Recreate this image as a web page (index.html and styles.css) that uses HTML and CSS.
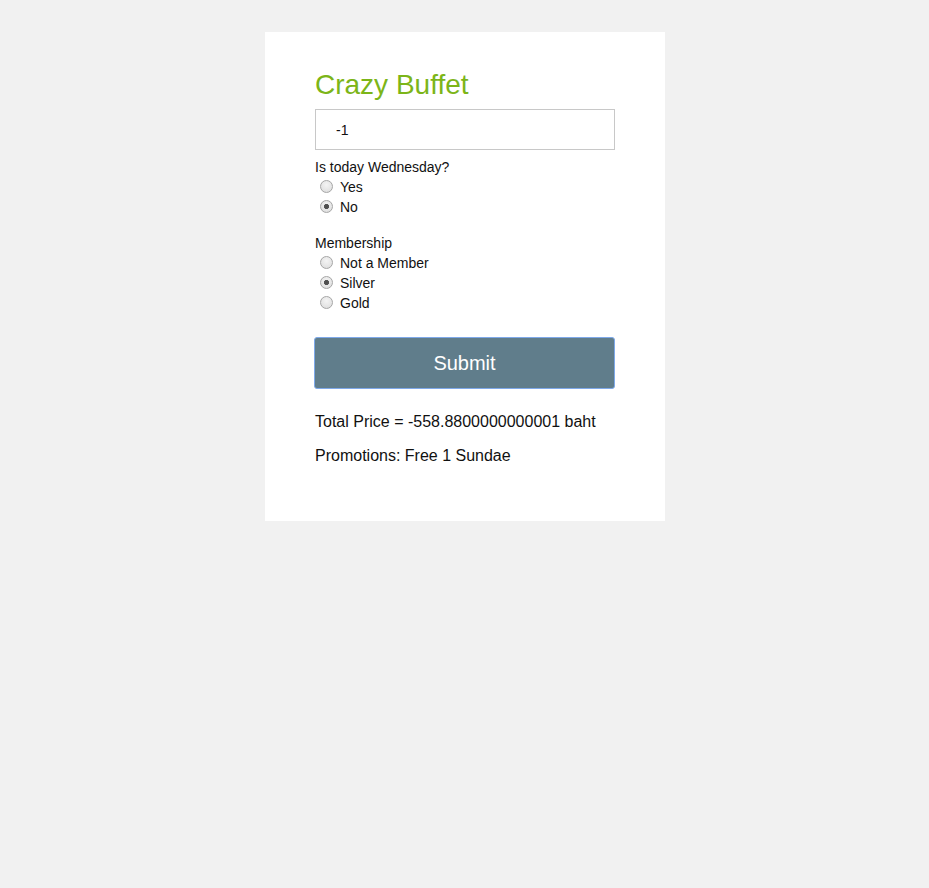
FILE: index.html
```html
<!DOCTYPE html>
<html>
<head>
<meta charset="utf-8">
<title>Crazy Buffet</title>
<link rel="stylesheet" href="styles.css">
</head>
<body>
<div class="card">
  <h1 class="title">Crazy Buffet</h1>
  <input class="amount" type="text" value="-1">
  <div class="group">
    <div class="group-label">Is today Wednesday?</div>
    <label class="option"><input class="radio" type="radio" name="wed"> Yes</label>
    <label class="option"><input class="radio" type="radio" name="wed" checked> No</label>
  </div>
  <div class="group group-member">
    <div class="group-label">Membership</div>
    <label class="option"><input class="radio" type="radio" name="mem"> Not a Member</label>
    <label class="option"><input class="radio" type="radio" name="mem" checked> Silver</label>
    <label class="option"><input class="radio" type="radio" name="mem"> Gold</label>
  </div>
  <button class="submit" type="button">Submit</button>
  <p class="result">Total Price = -558.8800000000001 baht</p>
  <p class="result promo">Promotions: Free 1 Sundae</p>
</div>
</body>
</html>
```
FILE: styles.css
```css
html, body {
  margin: 0;
  padding: 0;
}
body {
  background: #f1f1f1;
  font-family: "Liberation Sans", Arial, sans-serif;
  color: #111;
}
.card {
  width: 300px;
  margin: 32px 0 0 265px;
  background: #fff;
  padding: 37px 50px 56px;
}
.title {
  margin: 0;
  font-size: 28px;
  font-weight: normal;
  line-height: 32px;
  color: #7cb518;
}
.amount {
  display: block;
  box-sizing: border-box;
  width: 300px;
  height: 41px;
  margin: 8px 0 0;
  padding: 0 20px;
  border: 1px solid #c8c8c8;
  font-family: "Liberation Sans", Arial, sans-serif;
  font-size: 14px;
  color: #111;
  outline: none;
}
.group {
  margin-top: 7px;
}
.group-member {
  margin-top: 16px;
}
.group-label {
  font-size: 14px;
  line-height: 20px;
}
.option {
  display: flex;
  align-items: center;
  font-size: 14px;
  line-height: 20px;
}
.radio {
  appearance: none;
  -webkit-appearance: none;
  box-sizing: border-box;
  width: 13px;
  height: 13px;
  margin: 0 7px 2px 5px;
  border: 1px solid #a6a6a6;
  border-radius: 50%;
  background: radial-gradient(circle at 50% 35%, #f4f4f4 0%, #e2e2e2 70%, #d6d6d6 100%);
}
.radio:checked {
  background:
    radial-gradient(circle, #4a4a4a 0, #555 2.3px, transparent 2.9px),
    radial-gradient(circle at 50% 35%, #f4f4f4 0%, #e2e2e2 70%, #d6d6d6 100%);
}
.submit {
  display: block;
  box-sizing: border-box;
  width: 301px;
  height: 52px;
  margin: 24px 0 0 -1px;
  background: #607d8b;
  border: 1px solid #7ea9ea;
  border-radius: 3px;
  color: #fff;
  font-family: "Liberation Sans", Arial, sans-serif;
  font-size: 20px;
  cursor: pointer;
}
.result {
  margin: 24px 0 0;
  font-size: 16px;
  line-height: 18px;
}
.promo {
  margin-top: 16px;
}
```
